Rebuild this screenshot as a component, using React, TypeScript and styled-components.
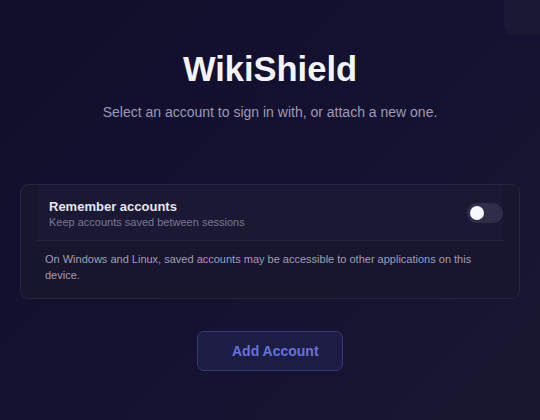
import React, { useState } from "react";
import styled, { createGlobalStyle } from "styled-components";

const Global = createGlobalStyle`
  html, body { margin: 0; padding: 0; height: 100%; }
  body {
    font-family: "Liberation Sans", Arial, sans-serif;
    background: linear-gradient(135deg, #100e2a 0%, #141231 55%, #19172f 100%);
    min-height: 420px;
    overflow: hidden;
  }
`;

const Page = styled.main`
  min-height: 420px;
  box-sizing: border-box;
  padding: 49px 20px 0;
  display: flex;
  flex-direction: column;
  align-items: center;
`;

const Title = styled.h1`
  margin: 0;
  font-size: 34.5px;
  line-height: 41px;
  font-weight: 700;
  color: #f3f3fc;
`;

const Subtitle = styled.p`
  margin: 12px 0 0;
  font-size: 14px;
  line-height: 20px;
  color: #9c9ab4;
`;

const Card = styled.section`
  margin-top: 62px;
  align-self: stretch;
  box-sizing: border-box;
  border: 1px solid #27253f;
  border-radius: 8px;
  background: #18162f;
  padding: 0 16px;
`;

const Row = styled.div`
  display: flex;
  align-items: center;
  justify-content: space-between;
  padding: 14px 0 11px 12px;
  border-bottom: 1px solid #28263f;
  background: #1a1832;
`;

const RowText = styled.div`
  display: flex;
  flex-direction: column;
`;

const RowTitle = styled.span`
  font-size: 13px;
  line-height: 16px;
  font-weight: 700;
  color: #e6e5f2;
`;

const RowHint = styled.span`
  font-size: 11px;
  line-height: 14px;
  color: #7b7993;
`;

const Switch = styled.button<{ $on: boolean }>`
  position: relative;
  width: 36px;
  height: 20px;
  margin-bottom: 2px;
  border: none;
  border-radius: 10px;
  padding: 0;
  cursor: pointer;
  background: ${(p) => (p.$on ? "#5c68d6" : "#2f2d48")};
  &::after {
    content: "";
    position: absolute;
    top: 3px;
    left: ${(p) => (p.$on ? "19px" : "3px")};
    width: 14px;
    height: 14px;
    border-radius: 50%;
    background: #f7f7ff;
  }
`;

const Note = styled.p`
  margin: 0;
  padding: 10px 8px 15px;
  font-size: 11px;
  line-height: 16px;
  color: #a09eb6;
`;

const AddButton = styled.button`
  margin-top: 32px;
  width: 146px;
  height: 40px;
  box-sizing: border-box;
  padding: 0 0 0 34px;
  border: 1px solid #35387c;
  border-radius: 7px;
  background: #1d1d44;
  color: #6672dc;
  font-family: "Liberation Sans", Arial, sans-serif;
  font-size: 14px;
  font-weight: 700;
  text-align: left;
  white-space: nowrap;
  cursor: pointer;
`;

const CornerControl = styled.div`
  position: fixed;
  top: -10px;
  right: -10px;
  width: 46px;
  height: 45px;
  border-radius: 9px;
  background: #1a1832;
`;

export default function App() {
  const [remember, setRemember] = useState(false);
  return (
    <>
      <Global />
      <CornerControl />
      <Page>
        <Title>WikiShield</Title>
        <Subtitle>Select an account to sign in with, or attach a new one.</Subtitle>
        <Card>
          <Row>
            <RowText>
              <RowTitle>Remember accounts</RowTitle>
              <RowHint>Keep accounts saved between sessions</RowHint>
            </RowText>
            <Switch $on={remember} onClick={() => setRemember(!remember)} aria-label="Remember accounts" />
          </Row>
          <Note>
            On Windows and Linux, saved accounts may be accessible to other applications on this device.
          </Note>
        </Card>
        <AddButton>Add Account</AddButton>
      </Page>
    </>
  );
}
